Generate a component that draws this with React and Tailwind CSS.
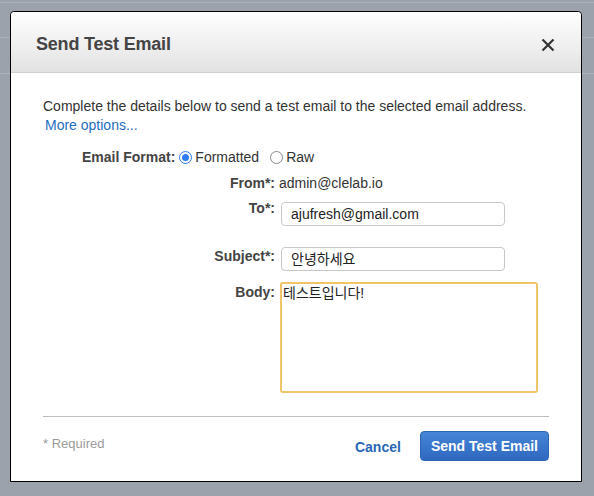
import React from "react";

const font = { fontFamily: '"Liberation Sans", Arial, "Noto Sans CJK KR", sans-serif' };

const Radio = ({ checked }) =>
  checked ? (
    <span className="inline-flex h-[13px] w-[13px] items-center justify-center rounded-full border border-[#2f7cf6] bg-white">
      <span className="h-[7px] w-[7px] rounded-full bg-[#2f7cf6]"></span>
    </span>
  ) : (
    <span className="inline-block h-[13px] w-[13px] rounded-full border border-[#8a8a8a] bg-white"></span>
  );

const App = () => {
  return (
    <div
      className="relative h-[496px] w-[594px] overflow-hidden bg-[#9ca2ab] pt-[11px] pl-[10px]"
      style={font}
    >
      <div className="absolute left-0 right-0 top-[2px] h-px bg-[#aab0b8]"></div>
      <div className="absolute left-0 right-0 top-[37px] h-px bg-[#aab0b8]"></div>
      <div className="absolute left-0 right-0 top-[73px] h-px bg-[#aab0b8]"></div>

      <div className="relative flex h-[471px] w-[572px] flex-col rounded-t-[4px] border border-black bg-white">
        <div className="flex h-[61px] items-center justify-between rounded-t-[4px] border-b border-[#cfcfcf] bg-gradient-to-b from-white to-[#e2e2e2] pl-[25px] pr-[26px] pt-[5px]">
          <h1 className="text-[18px] font-bold tracking-[-0.2px] text-[#444]">Send Test Email</h1>
          <svg width="14" height="14" viewBox="0 0 14 14" className="mt-[1px]">
            <path d="M1.5 1.5 L12.5 12.5 M12.5 1.5 L1.5 12.5" stroke="#333" strokeWidth="2.2" />
          </svg>
        </div>

        <div className="flex flex-1 flex-col px-[32px] pt-[25px]">
          <p className="text-[14px] leading-[17px] text-[#333]">
            Complete the details below to send a test email to the selected email address.
          </p>
          <a className="ml-[2px] mt-[2px] text-[14px] leading-[17px] text-[#1f6ebf]">More options...</a>

          <div className="mt-[15px] flex items-center pl-[39px] text-[14px] leading-[17px] text-[#333]">
            <span className="font-bold text-[#444]">Email Format:</span>
            <span className="ml-[4px] flex items-center gap-[3px]">
              <Radio checked />
              <span>Formatted</span>
            </span>
            <span className="ml-[11px] flex items-center gap-[3px]">
              <Radio />
              <span>Raw</span>
            </span>
          </div>

          <div className="mt-[9px] grid grid-cols-[232px_1fr] gap-x-[4px] text-[14px] leading-[17px] text-[#333]">
            <span className="text-right font-bold text-[#444]">From*:</span>
            <span>admin@clelab.io</span>

            <span className="mt-[8px] text-right font-bold text-[#444]">To*:</span>
            <div className="mt-[10px] ml-[2px] flex h-[24px] w-[224px] items-center rounded-[4px] border border-[#c8c8c8] px-[9px] text-[#222]">
              ajufresh@gmail.com
            </div>

            <span className="mt-[22px] text-right font-bold text-[#444]">Subject*:</span>
            <div className="mt-[21px] ml-[2px] flex h-[24px] w-[224px] items-center rounded-[4px] border border-[#c8c8c8] px-[9px] text-[#222]">
              안녕하세요
            </div>

            <span className="mt-[13px] text-right font-bold text-[#444]">Body:</span>
            <div className="mt-[11px] ml-[1px] h-[111px] w-[258px] rounded-[3px] border-2 border-[#f0c468] px-[1px] pt-[1px] text-[#222]">
              테스트입니다!
            </div>
          </div>

          <div className="mt-[23px] h-px w-full bg-[#bdbdbd]"></div>

          <div className="flex items-start justify-between pt-[14px]">
            <span className="mt-[3px] text-[13px] text-[#9a9a9a]">* Required</span>
            <div className="flex items-center gap-[19px]">
              <span className="mt-[2px] text-[14px] font-bold text-[#2a67b5]">Cancel</span>
              <button className="h-[30px] rounded-[4px] border border-[#2f64b3] bg-gradient-to-b from-[#4586d8] to-[#2f68bf] px-[10px] text-[14px] font-bold text-white">
                Send Test Email
              </button>
            </div>
          </div>
        </div>
      </div>
    </div>
  );
};

export default App;
